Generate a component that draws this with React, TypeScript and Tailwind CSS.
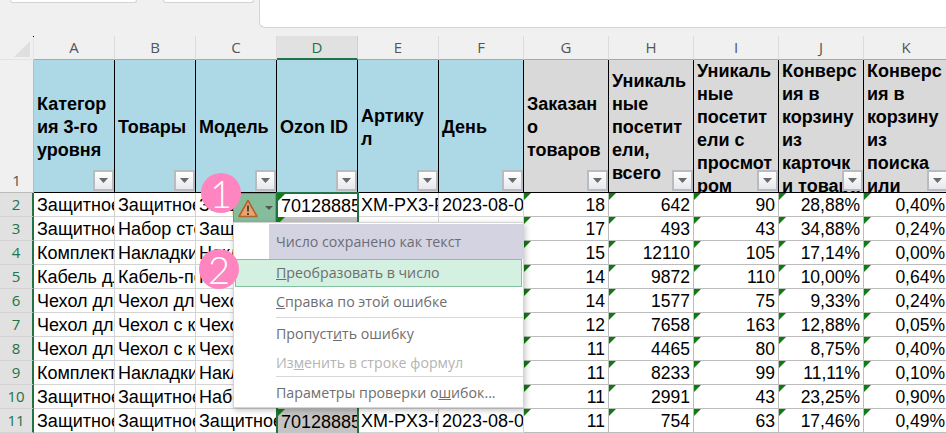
const COLS = ["A", "B", "C", "D", "E", "F", "G", "H", "I", "J", "K"];

const HEADERS = [
  { text: "Категор\nия 3-го\nуровня", top: false },
  { text: "Товары", top: false },
  { text: "Модель", top: false },
  { text: "Ozon ID", top: false },
  { text: "Артику\nл", top: false },
  { text: "День", top: false },
  { text: "Заказан\nо\nтоваров", top: false },
  { text: "Уникаль\nные\nпосетит\nели,\nвсего", top: false },
  { text: "Уникаль\nные\nпосетит\nели с\nпросмот\nром", top: true },
  { text: "Конверс\nия в\nкорзину\nиз\nкарточк\nи товара", top: true },
  { text: "Конверс\nия в\nкорзину\nиз\nпоиска\nили", top: true },
];

const ROWS = [
  ["Защитное стекло", "Защитное стекло", "Защитное стекло", "18", "642", "90", "28,88%", "0,40%"],
  ["Защитное стекло", "Набор стекол", "Защитное стекло", "17", "493", "43", "34,88%", "0,24%"],
  ["Комплект накладок", "Накладки на", "Накладки на", "15", "12110", "105", "17,14%", "0,00%"],
  ["Кабель для", "Кабель-переходник", "Кабель-переходник", "14", "9872", "110", "10,00%", "0,64%"],
  ["Чехол для", "Чехол для", "Чехол для", "14", "1577", "75", "9,33%", "0,24%"],
  ["Чехол для", "Чехол с крышкой", "Чехол с крышкой", "12", "7658", "163", "12,88%", "0,05%"],
  ["Чехол для", "Чехол с крышкой", "Чехол с крышкой", "11", "4465", "80", "8,75%", "0,40%"],
  ["Комплект накладок", "Накладки на", "Накладки на", "11", "8233", "99", "11,11%", "0,10%"],
  ["Защитное стекло", "Защитное стекло", "Набор стекол", "11", "2991", "43", "23,25%", "0,90%"],
  ["Защитное стекло", "Защитное стекло", "Защитное стекло", "11", "754", "63", "17,46%", "0,49%"],
];

function Tick() {
  return <span className="absolute left-0 top-0 h-[7px] w-[7px] bg-[#107c10] [clip-path:polygon(0_0,100%_0,0_100%)]" />;
}

function FilterButton() {
  return (
    <span className="absolute bottom-[1px] right-0 flex h-[21px] w-[21px] items-center justify-center border-2 border-[#b8bcc0] bg-gradient-to-b from-white to-[#e6e8ee]">
      <span className="h-[5px] w-[9px] bg-[#6b6b6b] [clip-path:polygon(0_0,100%_0,50%_100%)]" />
    </span>
  );
}

function TextCell({ children }: { children: React.ReactNode }) {
  return (
    <div className="flex h-[24px] items-center overflow-hidden whitespace-nowrap border-b border-r border-[#d4d4d4] bg-white pl-[3px] pt-[2px] text-[18px] text-black">
      {children}
    </div>
  );
}

function NumCell({ children }: { children: React.ReactNode }) {
  return (
    <div className="relative flex h-[24px] items-center justify-end overflow-hidden whitespace-nowrap border-b border-r border-[#bcbcbc] bg-white pr-[3px] pt-[1px] text-[17.5px] text-black">
      <Tick />
      {children}
    </div>
  );
}

function IdCell({ active }: { active: boolean }) {
  return (
    <div
      className={
        "relative z-10 -mx-px flex h-[24px] items-center overflow-hidden whitespace-nowrap border-x-2 border-[#217346] pl-[3px] pt-[2px] text-[18px] text-black " +
        (active ? "-mt-px h-[25px] border-t-2 bg-white" : "bg-[#c4c4c4]")
      }
    >
      <Tick />
      70128885
    </div>
  );
}

export default function App() {
  return (
    <div className="relative h-[433px] w-[946px] overflow-hidden bg-[#f0f0f0] font-['Liberation_Sans',Arial,sans-serif]">
      {/* ribbon leftovers */}
      <div className="flex h-[36px] items-start pl-[10px]">
        <div className="h-[3px] w-[127px] rounded-b border border-t-0 border-[#d4d4d4] bg-white" />
        <div className="ml-[26px] h-[3px] w-[91px] rounded-b border border-t-0 border-[#d4d4d4] bg-white" />
        <div className="ml-[5px] h-[28px] flex-1 rounded-bl-md border-b border-l border-[#d4d4d4] bg-white" />
      </div>

      <div className="grid w-[949px] grid-cols-[34px_repeat(5,81px)_repeat(6,85px)]">
        {/* column letters */}
        <div className="relative h-[24px] border-b border-r border-[#e4e4e4]">
          <span className="absolute left-[14px] top-[5px] h-[16px] w-[16px] bg-[#dfdfdf] [clip-path:polygon(100%_0,100%_100%,0_100%)]" />
          <span className="absolute right-[-1px] top-0 h-px w-px bg-black" />
        </div>
        {COLS.map((c) => (
          <div
            key={c}
            className={
              "flex h-[24px] items-center justify-center border-r font-['Open_Sans',sans-serif] text-[15px] " +
              (c === "D"
                ? "border-[#d0d0d0] border-b-2 border-b-[#217346] bg-[#e1e1e1] text-[#217346]"
                : "border-[#dcdcdc] border-b border-b-[#a8a8a8] text-[#555]")
            }
          >
            {c}
          </div>
        ))}

        {/* header row */}
        <div className="flex h-[133px] items-end justify-center border-b border-r border-[#bbb] pb-[1px] font-['Open_Sans',sans-serif] text-[15px] text-[#555]">
          1
        </div>
        {HEADERS.map((h, i) => (
          <div
            key={i}
            className={
              "relative flex h-[133px] overflow-hidden border-b border-r border-black pl-[3px] text-[18px] font-bold leading-[23px] text-black " +
              (i < 6 ? "bg-[#add8e6] " : "bg-[#d9d9d9] ") +
              (h.top ? "items-start" : "items-center pt-[3px]")
            }
          >
            <div className="whitespace-pre">{h.text}</div>
            <FilterButton />
          </div>
        ))}

        {/* data rows */}
        {ROWS.map((r, i) => (
          <div key={i} className="contents">
            <div className="flex h-[24px] items-center justify-center border-b border-r-2 border-[#d4d4d4] border-r-[#217346] bg-[#e1e1e1] font-['Open_Sans',sans-serif] text-[15px] text-[#217346]">
              {i + 2}
            </div>
            <TextCell>{r[0]}</TextCell>
            <TextCell>{r[1]}</TextCell>
            <TextCell>{r[2]}</TextCell>
            <IdCell active={i === 0} />
            <TextCell>XM-PX3-F</TextCell>
            <TextCell>2023-08-01</TextCell>
            <NumCell>{r[3]}</NumCell>
            <NumCell>{r[4]}</NumCell>
            <NumCell>{r[5]}</NumCell>
            <NumCell>{r[6]}</NumCell>
            <NumCell>{r[7]}</NumCell>
          </div>
        ))}
      </div>

      {/* error smart tag */}
      <div className="absolute left-[233px] top-[193px] z-20 flex h-[30px] w-[43px] items-center border border-[#5fa27c] bg-[#86bd9c] pl-[4px]">
        <svg width="20" height="19" viewBox="0 0 20 19">
          <path d="M10 1.5 L19 17.5 H1 Z" fill="#e6a472" stroke="#b4622a" strokeWidth="1.6" strokeLinejoin="round" />
          <path d="M10 6.5 V12.5 M10 14 V16" stroke="#4a3a30" strokeWidth="1.8" />
        </svg>
        <span className="ml-[7px] h-[4px] w-[8px] bg-[#555] [clip-path:polygon(0_0,100%_0,50%_100%)]" />
      </div>

      {/* error menu */}
      <div className="absolute left-[233px] top-[222px] z-20 h-[186px] w-[291px] border border-[#d4d4d4] bg-white pt-px font-['Open_Sans',sans-serif] text-[14.2px] text-[#6e6e6e] shadow-[1px_2px_6px_rgba(0,0,0,0.25)]">
        <div className="ml-[35px] flex h-[35px] items-center bg-[#d3d3e1] pl-[7px] text-[#6d6d78]">Число сохранено как текст</div>
        <div className="mx-[1px] flex h-[28px] items-center border border-[#84bf9e] bg-[#d3f0e0] pl-[40px]">
          <span>
            <u>П</u>реобразовать в число
          </span>
        </div>
        <div className="flex h-[30px] items-center pl-[42px]">
          <span>
            <u>С</u>правка по этой ошибке
          </span>
        </div>
        <div className="ml-[42px] h-px bg-[#d8d8d8]" />
        <div className="flex h-[31px] items-center pl-[42px]">
          <span>
            Пропуст<u>и</u>ть ошибку
          </span>
        </div>
        <div className="flex h-[27px] items-center pl-[42px] text-[#b4b4b4]">
          <span>
            Из<u>м</u>енить в строке формул
          </span>
        </div>
        <div className="ml-[42px] h-px bg-[#d8d8d8]" />
        <div className="flex h-[31px] items-center pl-[42px]">
          <span>
            Параметры проверки о<u>ш</u>ибок...
          </span>
        </div>
      </div>

      {/* step markers */}
      <div className="absolute left-[201px] top-[173px] z-30 flex h-[40px] w-[40px] items-center justify-center rounded-full bg-[#ff85c0] font-['Lato',sans-serif] text-[38px] font-light leading-none text-white">
        1
      </div>
      <div className="absolute left-[199px] top-[249px] z-30 flex h-[40px] w-[40px] items-center justify-center rounded-full bg-[#ff85c0] font-['Lato',sans-serif] text-[38px] font-light leading-none text-white">
        2
      </div>
    </div>
  );
}
